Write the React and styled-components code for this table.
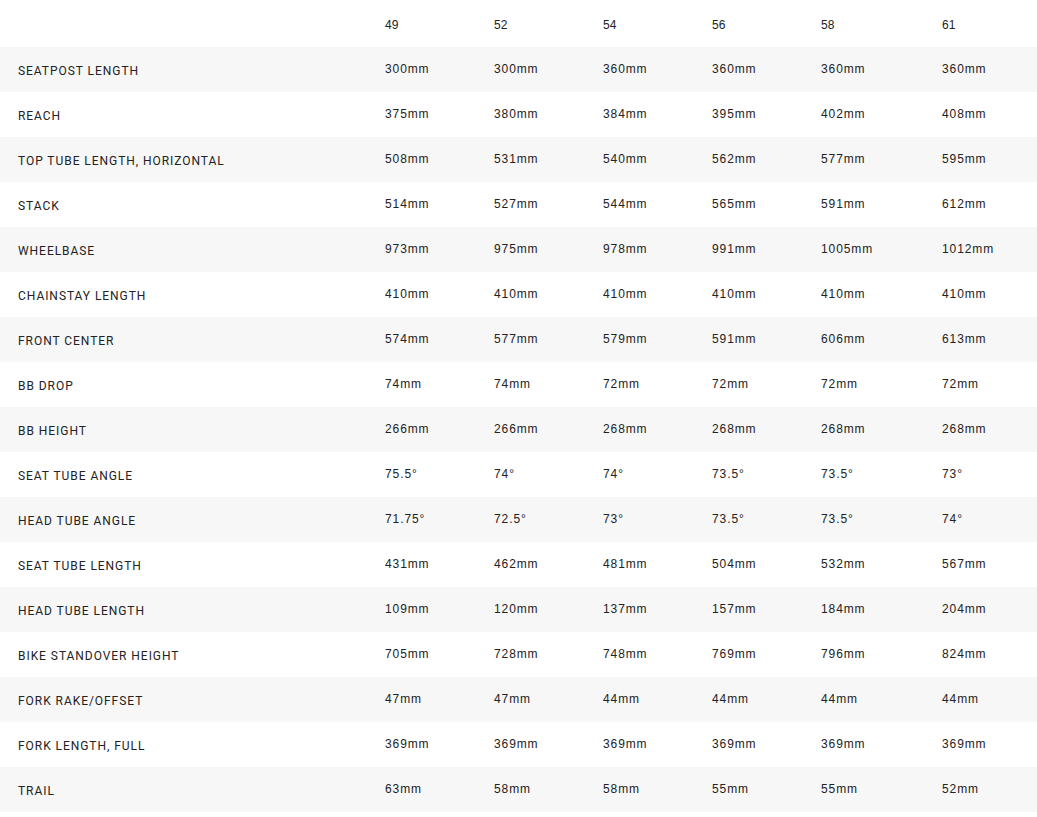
import React from "react";
import styled, { createGlobalStyle } from "styled-components";

const GlobalStyle = createGlobalStyle`
  body {
    margin: 0;
    background: #fff;
    color: #222;
  }
`;

const sizes = ["49", "52", "54", "56", "58", "61"];

const rows = [
  ["SEATPOST LENGTH", "300mm", "300mm", "360mm", "360mm", "360mm", "360mm"],
  ["REACH", "375mm", "380mm", "384mm", "395mm", "402mm", "408mm"],
  ["TOP TUBE LENGTH, HORIZONTAL", "508mm", "531mm", "540mm", "562mm", "577mm", "595mm"],
  ["STACK", "514mm", "527mm", "544mm", "565mm", "591mm", "612mm"],
  ["WHEELBASE", "973mm", "975mm", "978mm", "991mm", "1005mm", "1012mm"],
  ["CHAINSTAY LENGTH", "410mm", "410mm", "410mm", "410mm", "410mm", "410mm"],
  ["FRONT CENTER", "574mm", "577mm", "579mm", "591mm", "606mm", "613mm"],
  ["BB DROP", "74mm", "74mm", "72mm", "72mm", "72mm", "72mm"],
  ["BB HEIGHT", "266mm", "266mm", "268mm", "268mm", "268mm", "268mm"],
  ["SEAT TUBE ANGLE", "75.5°", "74°", "74°", "73.5°", "73.5°", "73°"],
  ["HEAD TUBE ANGLE", "71.75°", "72.5°", "73°", "73.5°", "73.5°", "74°"],
  ["SEAT TUBE LENGTH", "431mm", "462mm", "481mm", "504mm", "532mm", "567mm"],
  ["HEAD TUBE LENGTH", "109mm", "120mm", "137mm", "157mm", "184mm", "204mm"],
  ["BIKE STANDOVER HEIGHT", "705mm", "728mm", "748mm", "769mm", "796mm", "824mm"],
  ["FORK RAKE/OFFSET", "47mm", "47mm", "44mm", "44mm", "44mm", "44mm"],
  ["FORK LENGTH, FULL", "369mm", "369mm", "369mm", "369mm", "369mm", "369mm"],
  ["TRAIL", "63mm", "58mm", "58mm", "55mm", "55mm", "52mm"],
];

const Table = styled.div`
  width: 1037px;
  display: flex;
  flex-direction: column;
`;

const Row = styled.div`
  display: grid;
  grid-template-columns: 367px 109px 109px 109px 109px 121px 1fr;
  align-items: center;
  height: ${(p) => (p.$head ? "47px" : "45px")};
  padding-top: 2px;
  box-sizing: border-box;
  background: ${(p) => (p.$shaded ? "#f7f7f7" : "#fff")};
`;

const Label = styled.div`
  padding-left: 18px;
  font-family: Roboto, "Liberation Sans", sans-serif;
  font-size: 12px;
  letter-spacing: 0.95px;
  color: #222;
  padding-top: 1px;
`;

const Cell = styled.div`
  padding-left: 18px;
  padding-bottom: ${(p) => (p.$head ? "0" : "3px")};
  font-family: "Liberation Sans", Arial, sans-serif;
  font-size: 12px;
  letter-spacing: ${(p) => (p.$head ? "0" : "0.9px")};
  color: #222;
  white-space: nowrap;
`;

export default function App() {
  return (
    <>
      <GlobalStyle />
      <Table>
        <Row $head>
          <Label />
          {sizes.map((s) => (
            <Cell $head key={s}>
              {s}
            </Cell>
          ))}
        </Row>
        {rows.map(([label, ...values], i) => (
          <Row key={label} $shaded={i % 2 === 0}>
            <Label>{label}</Label>
            {values.map((v, j) => (
              <Cell key={j}>{v}</Cell>
            ))}
          </Row>
        ))}
      </Table>
    </>
  );
}
